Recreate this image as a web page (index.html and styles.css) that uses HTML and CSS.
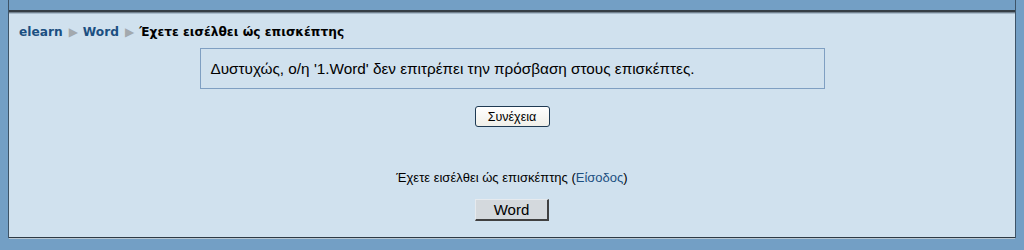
FILE: index.html
```html
<!DOCTYPE html>
<html lang="el">
<head>
<meta charset="utf-8">
<title>elearn: Word</title>
<link rel="stylesheet" href="styles.css">
</head>
<body>
<div class="page">
  <div class="header"></div>
  <div class="content">
    <div class="navbar">
      <a href="#" class="crumb">elearn</a><span class="sep">&#9654;</span><a href="#" class="crumb">Word</a><span class="sep">&#9654;</span><span class="current">Έχετε εισέλθει ώς επισκέπτης</span>
    </div>
    <div class="notice">Δυστυχώς, ο/η '1.Word' δεν επιτρέπει την πρόσβαση στους επισκέπτες.</div>
    <div class="continue"><button class="btn-continue">Συνέχεια</button></div>
    <div class="footer">
      <div class="logininfo">Έχετε εισέλθει ώς επισκέπτης (<a href="#">Είσοδος</a>)</div>
      <div class="homelink"><button class="btn-home">Word</button></div>
    </div>
  </div>
</div>
</body>
</html>
```
FILE: styles.css
```css
html, body {
  margin: 0;
  padding: 0;
}
body {
  background: #739fc5;
  font-family: "Liberation Sans", Arial, sans-serif;
  height: 250px;
  overflow: hidden;
}
.page {
  margin: 0 8px;
  border-left: 1px solid #3e5468;
  border-right: 1px solid #3e5468;
  height: 238px;
  box-sizing: border-box;
  display: flex;
  flex-direction: column;
}
.header {
  height: 10px;
  background: #739fc5;
}
.content {
  flex: 1;
  background: #d0e1ee;
  border-top: 2px solid #353e45;
  border-bottom: 1px solid #2e3a45;
  box-shadow: inset 0 1px 0 #73828f, inset 0 2px 0 #a9bccc, 0 1px 0 #b8c6d1;
  padding: 12px 10px 0 10px;
  display: flex;
  flex-direction: column;
}
.navbar {
  font-family: "DejaVu Sans", Verdana, sans-serif;
  font-size: 12.2px;
  font-weight: bold;
  line-height: 16px;
  padding-left: 0;
  color: #000;
  height: 16px;
}
.crumb {
  color: #1b4f81;
  text-decoration: none;
}
.sep {
  color: #a3a9ae;
  font-size: 12px;
  margin: 0 5px 0 6px;
  font-weight: normal;
}
.notice {
  margin: 8px auto 0 auto;
  width: 625px;
  box-sizing: border-box;
  border: 1px solid #7f9fc2;
  padding: 0 10px;
  height: 41px;
  line-height: 39px;
  font-size: 15.3px;
  color: #000;
}
.continue {
  text-align: center;
  margin-top: 17px;
}
.btn-continue {
  font-family: "Liberation Sans", Arial, sans-serif;
  font-size: 12.5px;
  width: 75px;
  height: 21px;
  padding: 0;
  border: 1px solid #1f3a53;
  border-radius: 3px;
  background: linear-gradient(#ffffff, #f0efe9);
  color: #000;
}
.footer {
  text-align: center;
  margin-top: 43px;
}
.logininfo {
  font-size: 13px;
  line-height: 15px;
  color: #000;
}
.logininfo a {
  color: #1b4f81;
  text-decoration: none;
}
.homelink {
  margin-top: 14px;
}
.btn-home {
  font-family: "Liberation Sans", Arial, sans-serif;
  font-size: 15px;
  width: 74px;
  height: 22px;
  padding: 0;
  background: #d4d9dd;
  border: 1px solid;
  border-color: #e6eaee #404040 #404040 #e6eaee;
  border-right-width: 2px;
  border-bottom-width: 2px;
  color: #000;
  line-height: 18px;
}
```
